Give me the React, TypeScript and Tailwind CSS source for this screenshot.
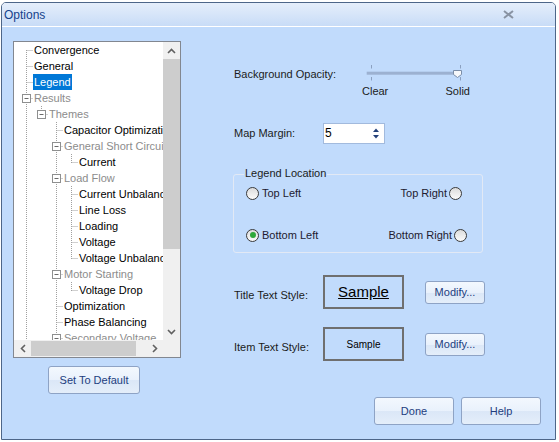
import React from 'react';

type Node = { t: string; l: number; kids?: boolean; dim?: boolean; sel?: boolean };

const nodes: Node[] = [
  { t: 'Convergence', l: 0 },
  { t: 'General', l: 0 },
  { t: 'Legend', l: 0, sel: true },
  { t: 'Results', l: 0, kids: true, dim: true },
  { t: 'Themes', l: 1, kids: true, dim: true },
  { t: 'Capacitor Optimization', l: 2 },
  { t: 'General Short Circuit', l: 2, kids: true, dim: true },
  { t: 'Current', l: 3 },
  { t: 'Load Flow', l: 2, kids: true, dim: true },
  { t: 'Current Unbalance', l: 3 },
  { t: 'Line Loss', l: 3 },
  { t: 'Loading', l: 3 },
  { t: 'Voltage', l: 3 },
  { t: 'Voltage Unbalance', l: 3 },
  { t: 'Motor Starting', l: 2, kids: true, dim: true },
  { t: 'Voltage Drop', l: 3 },
  { t: 'Optimization', l: 2 },
  { t: 'Phase Balancing', l: 2 },
  { t: 'Secondary Voltage', l: 2, kids: true, dim: true },
  { t: 'Voltage', l: 3 },
  { t: 'Reports', l: 0 },
];

const hasNext = (i: number) => {
  for (let j = i + 1; j < nodes.length; j++) {
    if (nodes[j].l < nodes[i].l) return false;
    if (nodes[j].l === nodes[i].l) return true;
  }
  return false;
};

const ancestorAt = (i: number, level: number) => {
  for (let j = i - 1; j >= 0; j--) if (nodes[j].l === level) return j;
  return -1;
};

const LINE = '#a0a0a0';

function Guides({ i }: { i: number }) {
  const n = nodes[i];
  const w = 20 + 15 * n.l;
  const cx = 12.5 + 15 * n.l;
  const cy = 8.5;
  const parts: React.ReactNode[] = [];
  for (let k = 0; k < n.l; k++) {
    const a = ancestorAt(i, k);
    if (a >= 0 && hasNext(a)) {
      const x = 12.5 + 15 * k;
      parts.push(<line key={'a' + k} x1={x} y1={0} x2={x} y2={16} stroke={LINE} strokeDasharray="1 1" />);
    }
  }
  parts.push(
    <line key="v" x1={cx} y1={i === 0 ? 8 : 0} x2={cx} y2={hasNext(i) ? 16 : 9} stroke={LINE} strokeDasharray="1 1" />
  );
  parts.push(<line key="h" x1={cx + 1} y1={cy} x2={cx + 7} y2={cy} stroke={LINE} strokeDasharray="1 1" />);
  if (n.kids) {
    parts.push(<rect key="b" x={cx - 4} y={cy - 4} width={8} height={8} fill="#fff" stroke="#8e8f8f" />);
    parts.push(<line key="m" x1={cx - 2} y1={cy} x2={cx + 2} y2={cy} stroke="#6a6a6a" />);
  }
  return (
    <svg width={w} height={16} className="shrink-0">
      {parts}
    </svg>
  );
}

function Tree() {
  return (
    <div className="w-[168px] h-[317px] border border-[#828790] bg-white flex flex-col overflow-hidden">
      <div className="flex h-[298px]">
        <div className="flex-1 overflow-hidden">
          {nodes.map((n, i) => (
            <div key={i} className="flex h-[16px] items-center whitespace-nowrap">
              <Guides i={i} />
              <span
                className={
                  n.sel
                    ? 'leading-[16px] bg-[#0078d7] text-white -ml-px px-px'
                    : n.dim
                    ? 'leading-[16px] text-[#8c8c8c]'
                    : 'leading-[16px] text-black'
                }
              >
                {n.t}
              </span>
            </div>
          ))}
        </div>
        <div className="w-[17px] bg-[#f0f0f0] flex flex-col">
          <div className="h-[17px] flex items-center justify-center">
            <svg width="9" height="6">
              <polyline points="1,5 4.5,1.5 8,5" fill="none" stroke="#606060" strokeWidth="1.6" />
            </svg>
          </div>
          <div className="h-[190px] bg-[#cdcdcd]" />
          <div className="flex-1" />
          <div className="h-[17px] flex items-center justify-center">
            <svg width="9" height="6">
              <polyline points="1,1 4.5,4.5 8,1" fill="none" stroke="#606060" strokeWidth="1.6" />
            </svg>
          </div>
        </div>
      </div>
      <div className="flex h-[17px] bg-[#f0f0f0]">
        <div className="w-[17px] flex items-center justify-center">
          <svg width="6" height="9">
            <polyline points="5,1 1.5,4.5 5,8" fill="none" stroke="#606060" strokeWidth="1.6" />
          </svg>
        </div>
        <div className="w-[105px] my-[1px] bg-[#cdcdcd]" />
        <div className="flex-1" />
        <div className="w-[17px] flex items-center justify-center">
          <svg width="6" height="9">
            <polyline points="1,1 4.5,4.5 1,8" fill="none" stroke="#606060" strokeWidth="1.6" />
          </svg>
        </div>
        <div className="w-[17px]" />
      </div>
    </div>
  );
}

const btn =
  'border border-[#8ea3c5] rounded-[3px] bg-[linear-gradient(#f3f8fe,#e9f1fc_50%,#dbe7f7_52%,#e4eefa)] text-[#223d7e] flex items-center justify-center';

function Radio({ label, checked, right }: { label: string; checked?: boolean; right?: boolean }) {
  const circle = (
    <span className="w-[13px] h-[13px] rounded-full border border-[#3a3a3a] bg-[linear-gradient(#dcdcdc,#fbfbfb)] flex items-center justify-center shrink-0">
      {checked && <span className="w-[6px] h-[6px] rounded-full bg-[#2fa83a]" />}
    </span>
  );
  return (
    <div className={right ? 'flex items-center gap-[2px]' : 'flex items-center gap-[3px]'}>
      {!right && circle}
      <span className="leading-[14px] text-[#221a30]">{label}</span>
      {right && circle}
    </div>
  );
}

export default function App() {
  return (
    <div className="w-[559px] h-[442px] bg-white pt-[2px] pl-[1px] font-['Liberation_Sans',Arial,sans-serif] text-[11px] text-[#1b1b1b]">
      <div className="w-[555px] h-[438px] border border-[#4d6689] rounded-t-[5px] flex flex-col overflow-hidden">
        <div className="h-[24px] border-b border-white bg-[linear-gradient(#e5eefb,#c8dcf7)] flex items-center justify-between pl-[2px] pr-[41px]">
          <span className="text-[12px] text-[#15428b]">Options</span>
          <svg width="11" height="9">
            <path d="M1 1 L10 8 M10 1 L1 8" stroke="#8993a3" strokeWidth="2" />
          </svg>
        </div>
        <div className="flex-1 bg-[#c1dbfc] flex">
          <div className="pl-[11px] pt-[14px] flex flex-col">
            <Tree />
            <button className={btn + ' mt-[8px] ml-[35px] w-[92px] h-[28px]'}>Set To Default</button>
          </div>
          <div className="flex-1 ml-[53px] pt-[35px] flex flex-col">
            <div className="flex h-[36px]">
              <div className="w-[128px] leading-[24px]">Background Opacity:</div>
              <div className="flex flex-col">
                <svg width="110" height="22">
                  <rect x="4.7" y="9.7" width="91" height="3" fill="#9cb1d1" />
                  <line x1="9.5" y1="3" x2="9.5" y2="6.5" stroke="#8ba0c0" />
                  <line x1="98.5" y1="3" x2="98.5" y2="6.5" stroke="#8ba0c0" />
                  <line x1="9.5" y1="15" x2="9.5" y2="18.5" stroke="#8ba0c0" />
                  <line x1="98.5" y1="15" x2="98.5" y2="18.5" stroke="#8ba0c0" />
                  <path d="M91.5 8.5 H99.5 V12.5 L95.5 15.5 L91.5 12.5 Z" fill="#f6f8fb" stroke="#7b8ea9" />
                </svg>
                <div className="w-[108px] flex justify-between leading-[14px]">
                  <span>Clear</span>
                  <span>Solid</span>
                </div>
              </div>
            </div>
            <div className="flex items-center h-[21px] mt-[25px]">
              <div className="w-[89px]">Map Margin:</div>
              <div className="w-[62px] h-[21px] border border-[#a2badd] bg-white flex">
                <span className="flex-1 pl-[1px] leading-[19px] text-[12px] text-black">5</span>
                <div className="w-[16px] flex flex-col items-center justify-center gap-[3px]">
                  <svg width="6" height="4">
                    <path d="M0 4 L3 0.5 L6 4 Z" fill="#23407a" />
                  </svg>
                  <svg width="6" height="4">
                    <path d="M0 0 L3 3.5 L6 0 Z" fill="#23407a" />
                  </svg>
                </div>
              </div>
            </div>
            <div className="relative -ml-px mt-[30px] w-[250px] h-[79px] border border-[#e2e9f5] rounded-[3px]">
              <span className="absolute left-[10px] -top-[9px] px-px bg-[#c1dbfc] leading-[14px]">Legend Location</span>
              <div className="flex justify-between pl-[12px] pr-[20px] mt-[11px]">
                <Radio label="Top Left" />
                <Radio label="Top Right" right />
              </div>
              <div className="flex justify-between pl-[12px] pr-[15px] mt-[28px]">
                <Radio label="Bottom Left" checked />
                <Radio label="Bottom Right" right />
              </div>
            </div>
            <div className="flex h-[34px] mt-[22px]">
              <div className="w-[89px] mt-[13px] leading-[14px]">Title Text Style:</div>
              <div className="w-[81px] h-[34px] border-2 border-[#6f6f6f] flex items-center justify-center">
                <span className="text-[15px] underline text-black">Sample</span>
              </div>
              <button className={btn + ' ml-[21px] mt-[6px] w-[60px] h-[23px] text-[#3a3a8e]'}>Modify...</button>
            </div>
            <div className="flex h-[34px] mt-[18px]">
              <div className="w-[89px] mt-[13px] leading-[14px]">Item Text Style:</div>
              <div className="w-[81px] h-[34px] border-2 border-[#6f6f6f] flex items-center justify-center">
                <span className="text-[10px] text-black">Sample</span>
              </div>
              <button className={btn + ' ml-[21px] mt-[6px] w-[60px] h-[23px] text-[#3a3a8e]'}>Modify...</button>
            </div>
            <div className="flex justify-end gap-[7px] pr-[14px] mt-[36px]">
              <button className={btn + ' w-[80px] h-[28px]'}>Done</button>
              <button className={btn + ' w-[80px] h-[28px]'}>Help</button>
            </div>
          </div>
        </div>
      </div>
    </div>
  );
}
